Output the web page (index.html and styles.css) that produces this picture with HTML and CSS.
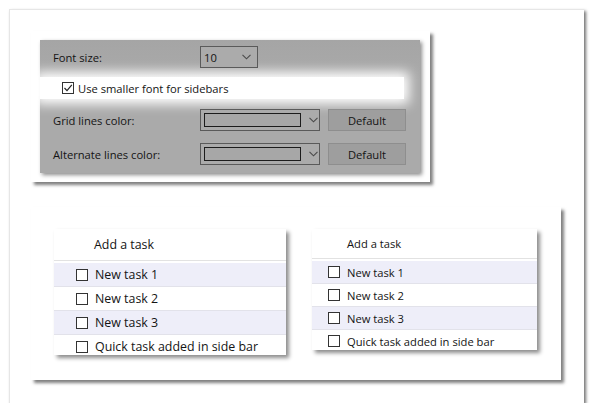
FILE: index.html
```html
<!DOCTYPE html>
<html>
<head>
<meta charset="utf-8">
<link rel="stylesheet" href="styles.css">
</head>
<body>
<div class="frame">
  <div class="settings-card">
    <div class="panel">
      <div class="row">
        <span class="label">Font size:</span>
        <div class="select select-size">
          <span class="value">10</span>
          <svg class="chev" width="9" height="6" viewBox="0 0 9 6"><polyline points="0.5,0.8 4.5,4.8 8.5,0.8" fill="none" stroke="#4a4a4a" stroke-width="1.1"/></svg>
        </div>
      </div>
      <div class="row check-row">
        <span class="cb"><svg width="10" height="10" viewBox="0 0 10 10"><polyline points="1.5,5 4,7.6 8.8,1.8" fill="none" stroke="#222" stroke-width="1.2"/></svg></span>
        <span class="check-text">Use smaller font for sidebars</span>
      </div>
      <div class="row color-row">
        <span class="label">Grid lines color:</span>
        <div class="select select-color">
          <span class="swatch"></span>
          <svg class="chev" width="9" height="6" viewBox="0 0 9 6"><polyline points="0.5,0.8 4.5,4.8 8.5,0.8" fill="none" stroke="#4a4a4a" stroke-width="1.1"/></svg>
        </div>
        <button class="btn">Default</button>
      </div>
      <div class="row color-row">
        <span class="label">Alternate lines color:</span>
        <div class="select select-color">
          <span class="swatch"></span>
          <svg class="chev" width="9" height="6" viewBox="0 0 9 6"><polyline points="0.5,0.8 4.5,4.8 8.5,0.8" fill="none" stroke="#4a4a4a" stroke-width="1.1"/></svg>
        </div>
        <button class="btn">Default</button>
      </div>
    </div>
  </div>

  <div class="tasks-card">
    <div class="tasklist tl-large">
      <div class="tl-head">Add a task</div>
      <div class="tl-row alt"><span class="box"></span><span>New task 1</span></div>
      <div class="tl-row"><span class="box"></span><span>New task 2</span></div>
      <div class="tl-row alt"><span class="box"></span><span>New task 3</span></div>
      <div class="tl-row"><span class="box"></span><span>Quick task added in side bar</span></div>
    </div>
    <div class="tasklist tl-small">
      <div class="tl-head">Add a task</div>
      <div class="tl-row alt"><span class="box"></span><span>New task 1</span></div>
      <div class="tl-row"><span class="box"></span><span>New task 2</span></div>
      <div class="tl-row alt"><span class="box"></span><span>New task 3</span></div>
      <div class="tl-row"><span class="box"></span><span>Quick task added in side bar</span></div>
    </div>
  </div>
</div>
</body>
</html>
```

FILE: styles.css
```css
* { box-sizing: border-box; }

html, body {
  margin: 0;
  padding: 0;
  background: #ffffff;
}

body {
  font-family: "Open Sans", "Noto Sans", sans-serif;
  color: #141414;
}

.frame {
  margin: 9px 0 0 9px;
  width: 575px;
  height: 394px;
  border-top: 1px solid #e6e6e6;
  border-left: 1px solid #e6e6e6;
  background: #ffffff;
  box-shadow: 2px 2px 3px rgba(0, 0, 0, 0.55);
  padding: 21px 0 0 21px;
}

/* ---------- settings card ---------- */
.settings-card {
  width: 399px;
  height: 151px;
  background: #ffffff;
  padding: 9px 10px 9px 9px;
  box-shadow: 3px 3px 3px rgba(0, 0, 0, 0.5);
}

.panel {
  height: 133px;
  background: linear-gradient(#a5a5a5, #aaaaaa 30%, #aaaaaa);
  padding: 6px 0 0 0;
  box-shadow: 2px 2px 4px rgba(0, 0, 0, 0.45);
  font-size: 11.2px;
}

.row {
  display: flex;
  align-items: center;
  height: 22px;
  padding-left: 13px;
}

.label {
  width: 147px;
}

.select {
  display: flex;
  align-items: center;
  height: 22px;
  border: 1px solid #5a5a5a;
  background: #ababab;
}

.select-size {
  width: 58px;
  padding-left: 3px;
}

.select-size .value {
  flex: 1;
}

.select-size .chev {
  margin-right: 6px;
}

.select-color {
  width: 120px;
  padding-left: 3px;
}

.swatch {
  width: 97px;
  height: 14px;
  border: 1px solid #1c1c1c;
  background: #a7a7a7;
}

.select-color .chev {
  margin-left: 8px;
}

.check-row {
  height: 22px;
  margin-top: 9px;
  margin-bottom: 1px;
  margin-right: 16px;
  padding-left: 22px;
  background: #ffffff;
  box-shadow: 0 0 12px 5px #ffffff;
}

.cb {
  display: flex;
  align-items: center;
  justify-content: center;
  width: 12px;
  height: 12px;
  border: 1px solid #333333;
  background: #ffffff;
  margin-right: 4px;
}

.color-row {
  margin-top: 10px;
}

.color-row + .color-row {
  margin-top: 12px;
}

.btn {
  margin-left: 8px;
  width: 78px;
  height: 22px;
  border: 1px solid #8e8e8e;
  background: #9e9e9e;
  font-family: inherit;
  font-size: 11.2px;
  color: #141414;
  padding: 0;
}

/* ---------- tasks card ---------- */
.tasks-card {
  margin-top: 25px;
  width: 530px;
  height: 173px;
  background: #ffffff;
  box-shadow: 3px 3px 3px rgba(0, 0, 0, 0.5);
  padding: 22px 0 0 23px;
  display: flex;
  align-items: flex-start;
  gap: 26px;
}

.tasklist {
  background: #ffffff;
  overflow: hidden;
  box-shadow: 3px 3px 4px rgba(0, 0, 0, 0.45);
}

.tl-head {
  border-bottom: 1px solid #e2e2e2;
  margin-bottom: 2px;
  display: flex;
  align-items: center;
}

.tl-row {
  display: flex;
  align-items: center;
  border-bottom: 1px solid #e2e2ea;
}

.tl-row.alt {
  background: #eeeef9;
}

.box {
  width: 12px;
  height: 12px;
  border: 1px solid #333333;
  background: #ffffff;
  flex: none;
}

.tl-large {
  width: 232px;
  height: 126px;
  font-size: 12.4px;
}

.tl-large .tl-head {
  height: 32px;
  padding-left: 40px;
}

.tl-large .tl-row {
  height: 24px;
  padding-left: 22px;
}

.tl-large .box {
  margin-right: 7px;
}

.tl-small {
  width: 225px;
  height: 121px;
  font-size: 11.2px;
}

.tl-small .tl-head {
  height: 30px;
  padding-left: 35px;
}

.tl-small .tl-row {
  height: 23px;
  padding-left: 16px;
}

.tl-small .box {
  margin-right: 7px;
}
```
